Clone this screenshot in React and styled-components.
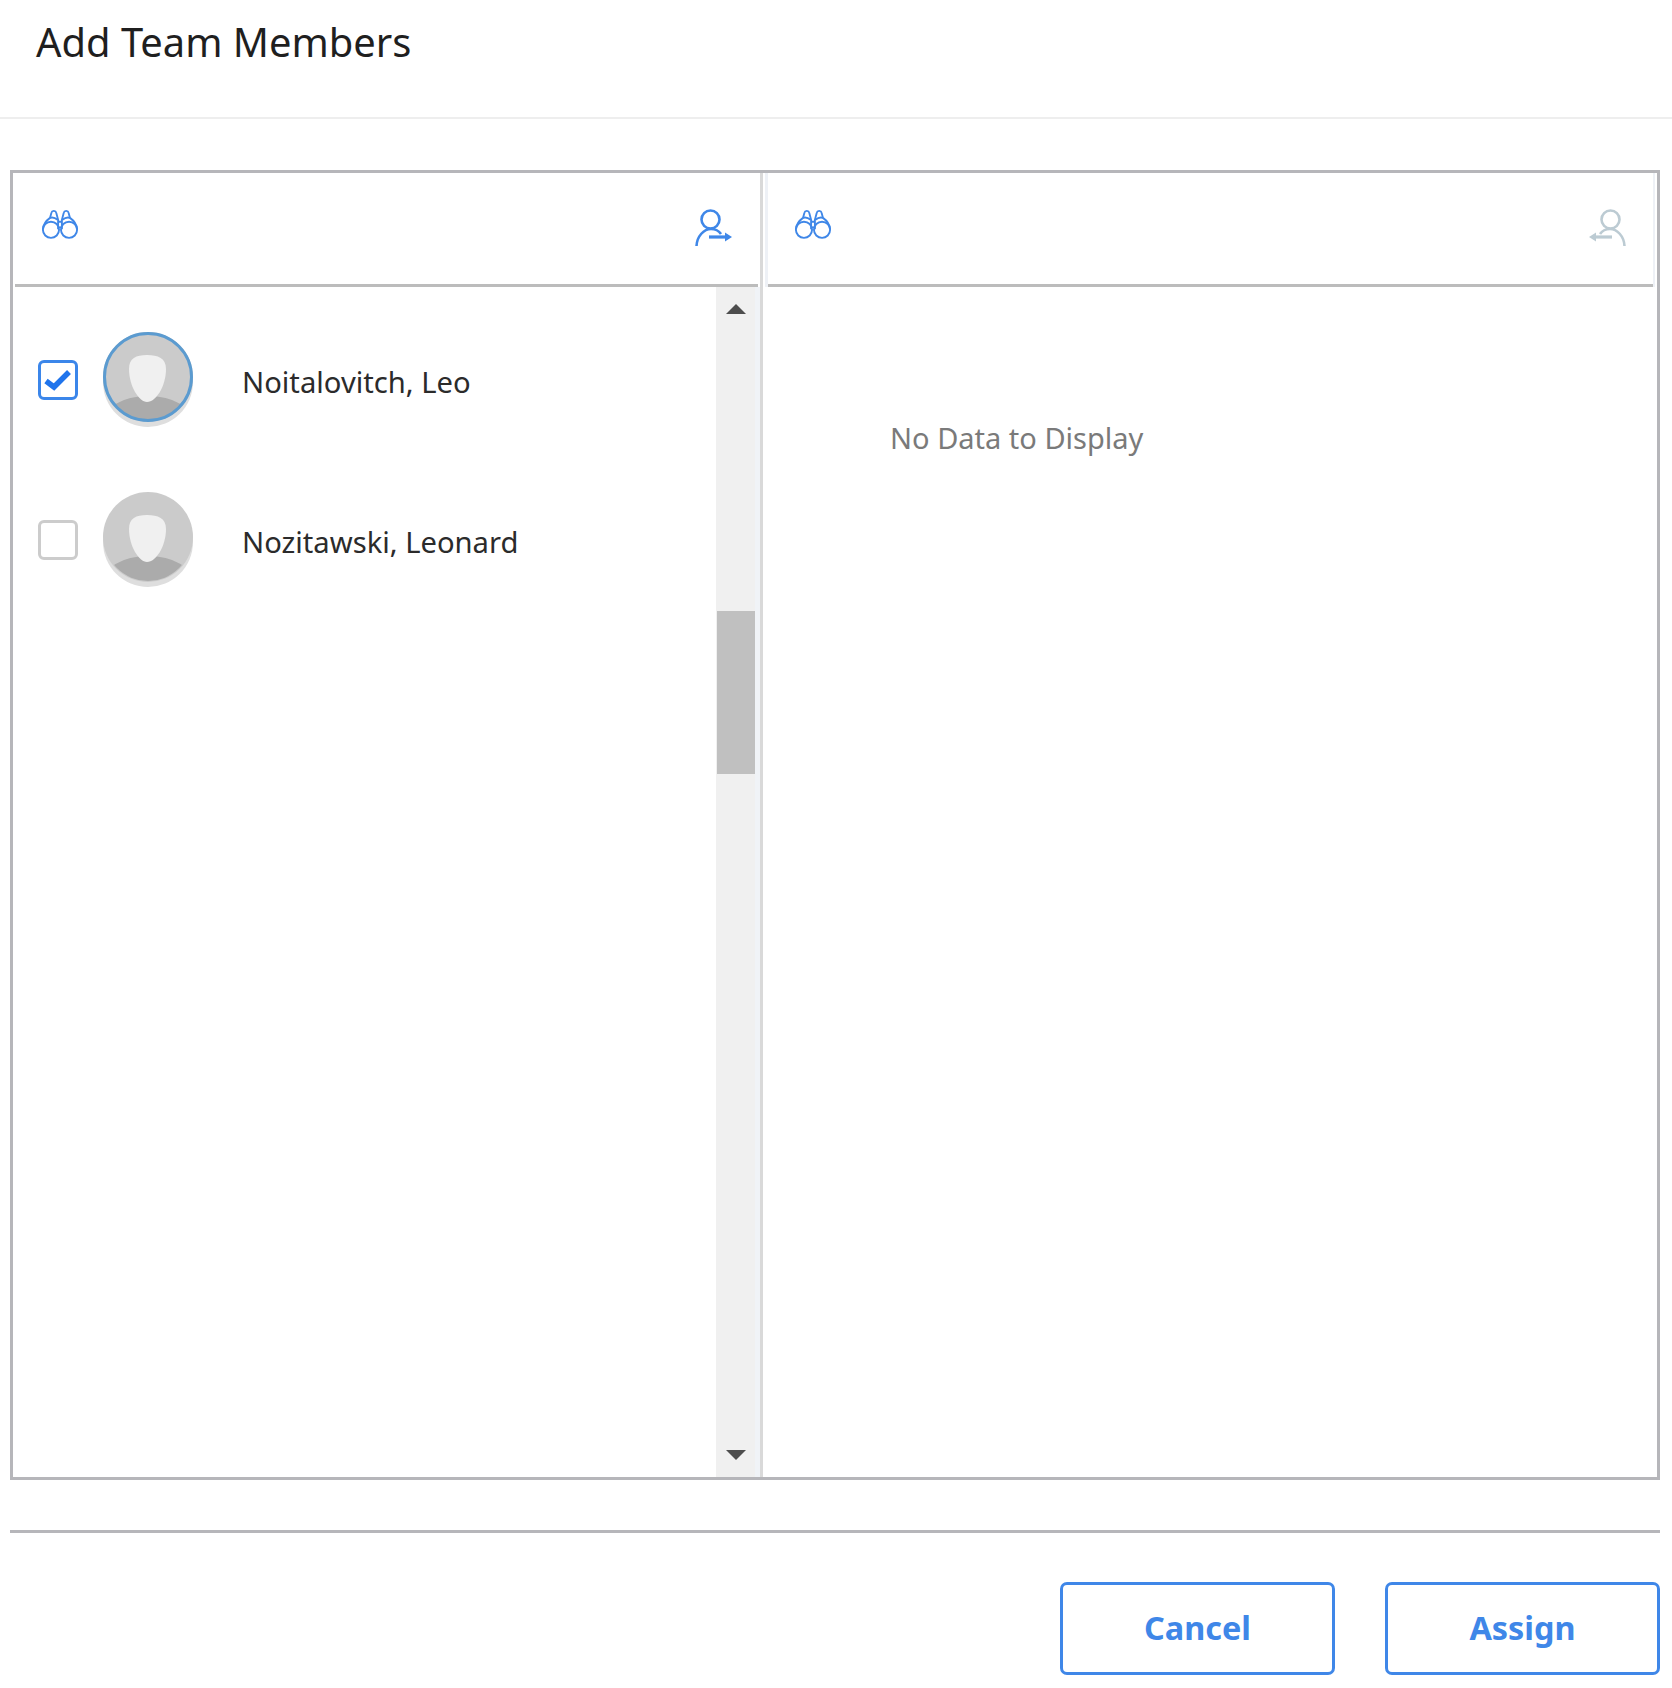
import React from "react";
import styled, { createGlobalStyle } from "styled-components";

const Global = createGlobalStyle`
  html, body { margin: 0; padding: 0; background: #fff; }
  body { font-family: "Noto Sans", "Open Sans", sans-serif; }
`;
const Page = styled.div`
  width: 1672px; height: 1688px; overflow: hidden; box-sizing: border-box;
  display: flex; flex-direction: column;
`;
const Header = styled.header`
  height: 119px; box-sizing: border-box; padding: 15px 0 0 36px;
  border-bottom: 2px solid #eeeeee;
`;
const Title = styled.h1`
  margin: 0; font-size: 39.9px; line-height: 54px; font-weight: 400; color: #1f1f1f;
`;
const Frame = styled.section`
  display: flex; box-sizing: border-box; margin: 51px 12px 0 10px; height: 1310px;
  border: 3px solid #b6b6ba;
`;
const LeftPanel = styled.div`
  width: 747px; display: flex; flex-direction: column;
`;
const RightPanel = styled.div`
  flex: 1; display: flex; flex-direction: column; border-left: 3px solid #d9d9d9;
`;
const Toolbar = styled.div`
  height: 114px; box-sizing: border-box; display: flex; align-items: center;
  justify-content: space-between; padding: ${p => p.$pad};
  margin: ${p => p.$margin}; border-bottom: 3px solid #bcbcbc;
  ${p => p.$stripe && "box-shadow: -3px 0 0 #eef1f6, 2px 0 0 #eef1f6;"}
`;
const Body = styled.div`
  flex: 1; display: flex; min-height: 0;
`;
const List = styled.div`
  flex: 1; padding-top: 12px;
`;
const Row = styled.div`
  height: 160px; display: flex; align-items: center; padding-left: 25px;
`;
const Check = styled.div`
  width: 40px; height: 40px; margin-top: 2px; box-sizing: border-box; border-radius: 6px;
  border: 3px solid ${p => (p.$on ? "#3b86ea" : "#cccccc")};
  display: flex; align-items: center; justify-content: center; background: #fff;
`;
const Avatar = styled.div`
  width: 90px; height: 95px; margin-left: 25px; flex: none; line-height: 0;
`;
const Name = styled.span`
  margin: 6px 0 0 49px; font-size: 29.2px; line-height: 40px; color: #2b2b2b;
`;
const Track = styled.div`
  width: 44px; background: #f0f0f0; display: flex; flex-direction: column; align-items: center;
  flex: none; box-shadow: inset -5px 0 0 #f0f3f7;
`;
const Arrow = styled.div`
  width: 0; height: 0; flex: none; border-left: 10px solid transparent; border-right: 10px solid transparent;
  ${p => (p.$down
    ? "border-top: 10px solid #4d4d4d; margin: auto 4px 17px 0;"
    : "border-bottom: 10px solid #4d4d4d; margin: 17px 4px 0 0;")}
`;
const Thumb = styled.div`
  width: 38px; height: 163px; background: #c0c0c0; margin: 297px 5px 0 1px; flex: none;
`;
const Empty = styled.div`
  padding: 131px 0 0 127px; font-size: 29px; line-height: 40px; color: #7a7a7a;
`;
const Footer = styled.footer`
  margin: 50px 12px 0 10px; border-top: 3px solid #b6b6ba; padding-top: 49px;
  display: flex; justify-content: flex-end; gap: 50px;
`;
const Button = styled.button`
  width: 275px; height: 93px; box-sizing: border-box; background: #fff; border: 3px solid #3f87e8;
  border-radius: 7px; color: #3f87e8; font: 700 32.4px "Noto Sans", sans-serif; padding: 0 0 4px;
`;
const BinocularSvg = styled.svg`
  margin-bottom: 8px; flex: none;
`;
const PersonSvg = styled.svg`
  margin: 0 1px 1px 0; flex: none;
`;

const Binoculars = () => (
  <BinocularSvg width="38" height="32" viewBox="-1 0 40 33" fill="none" stroke="#3f87e8" strokeWidth="2">
    <circle cx="9.5" cy="21.5" r="8.5" />
    <circle cx="28.5" cy="21.5" r="8.5" />
    <path d="M1 21 C1.5 15 5 11.5 8.5 9 L10 3.5 C10.5 1 14.5 1 15 3.5 L17 11 V21" />
    <path d="M37 21 C36.5 15 33 11.5 29.5 9 L28 3.5 C27.5 1 23.5 1 23 3.5 L21 11 V21" />
    <path d="M17 13 H21 M17 19 H21 M8.5 9 C11 8 14 9 16.5 11 M29.5 9 C27 8 24 9 21.5 11" />
  </BinocularSvg>
);
const PersonOut = () => (
  <PersonSvg width="37" height="38" viewBox="0 0 37 38" fill="none" stroke="#3f87e8" strokeWidth="2.6">
    <circle cx="15.5" cy="10.5" r="9" />
    <path d="M1.5 37 C2 27 9 20 16 20 C20 20 24 22 26 25" />
    <path d="M14 28 H31" strokeWidth="3.2" />
    <path d="M30 23.5 L37 28 L30 32.5 Z" fill="#3f87e8" stroke="none" />
  </PersonSvg>
);
const PersonIn = () => (
  <PersonSvg width="37" height="38" viewBox="0 0 37 38" fill="none" stroke="#bccbd3" strokeWidth="2.6">
    <circle cx="21.5" cy="10.5" r="9" />
    <path d="M35.5 37 C35 27 28 20 21 20 C17 20 13 22 11 25" />
    <path d="M23 28 H6" strokeWidth="3.2" />
    <path d="M7 23.5 L0 28 L7 32.5 Z" fill="#bccbd3" stroke="none" />
  </PersonSvg>
);
const Tick = () => (
  <svg width="28" height="24" viewBox="0 0 28 24" fill="none" stroke="#1f74ec" strokeWidth="5.5">
    <path d="M2 13 L10 19 L25 4" />
  </svg>
);
const Face = ({ ring, clip }) => (
  <svg width="90" height="95" viewBox="0 0 90 95">
    <defs>
      <clipPath id={clip}><circle cx="45" cy="45" r="44" /></clipPath>
    </defs>
    <circle cx="45" cy="50" r="45" fill="#dedede" />
    <circle cx="45" cy="45" r="45" fill="#cbcbcb" />
    <g clipPath={`url(#${clip})`}>
      <ellipse cx="45" cy="91" rx="46" ry="27" fill="#ababab" />
    </g>
    <path d="M44 23 C33 23 26 26 26 37 C26 54 36 70 44 70 C53 70 63 54 63 37 C63 26 55 23 44 23 Z" fill="#f0f0f0" />
    {ring && <circle cx="45" cy="45" r="43.5" fill="none" stroke="#5b9bd0" strokeWidth="3" />}
  </svg>
);

export default function App() {
  return (
    <Page>
      <Global />
      <Header><Title>Add Team Members</Title></Header>
      <Frame>
        <LeftPanel>
          <Toolbar $pad="0 25px 0 26px" $margin="0 2px">
            <Binoculars />
            <PersonOut />
          </Toolbar>
          <Body>
            <List>
              <Row>
                <Check $on><Tick /></Check>
                <Avatar><Face ring clip="a1" /></Avatar>
                <Name>Noitalovitch, Leo</Name>
              </Row>
              <Row>
                <Check />
                <Avatar><Face clip="a2" /></Avatar>
                <Name>Nozitawski, Leonard</Name>
              </Row>
            </List>
            <Track>
              <Arrow />
              <Thumb />
              <Arrow $down />
            </Track>
          </Body>
        </LeftPanel>
        <RightPanel>
          <Toolbar $pad="0 26px 0 26px" $margin="0 4px 0 5px" $stripe>
            <Binoculars />
            <PersonIn />
          </Toolbar>
          <Empty>No Data to Display</Empty>
        </RightPanel>
      </Frame>
      <Footer>
        <Button>Cancel</Button>
        <Button>Assign</Button>
      </Footer>
    </Page>
  );
}
